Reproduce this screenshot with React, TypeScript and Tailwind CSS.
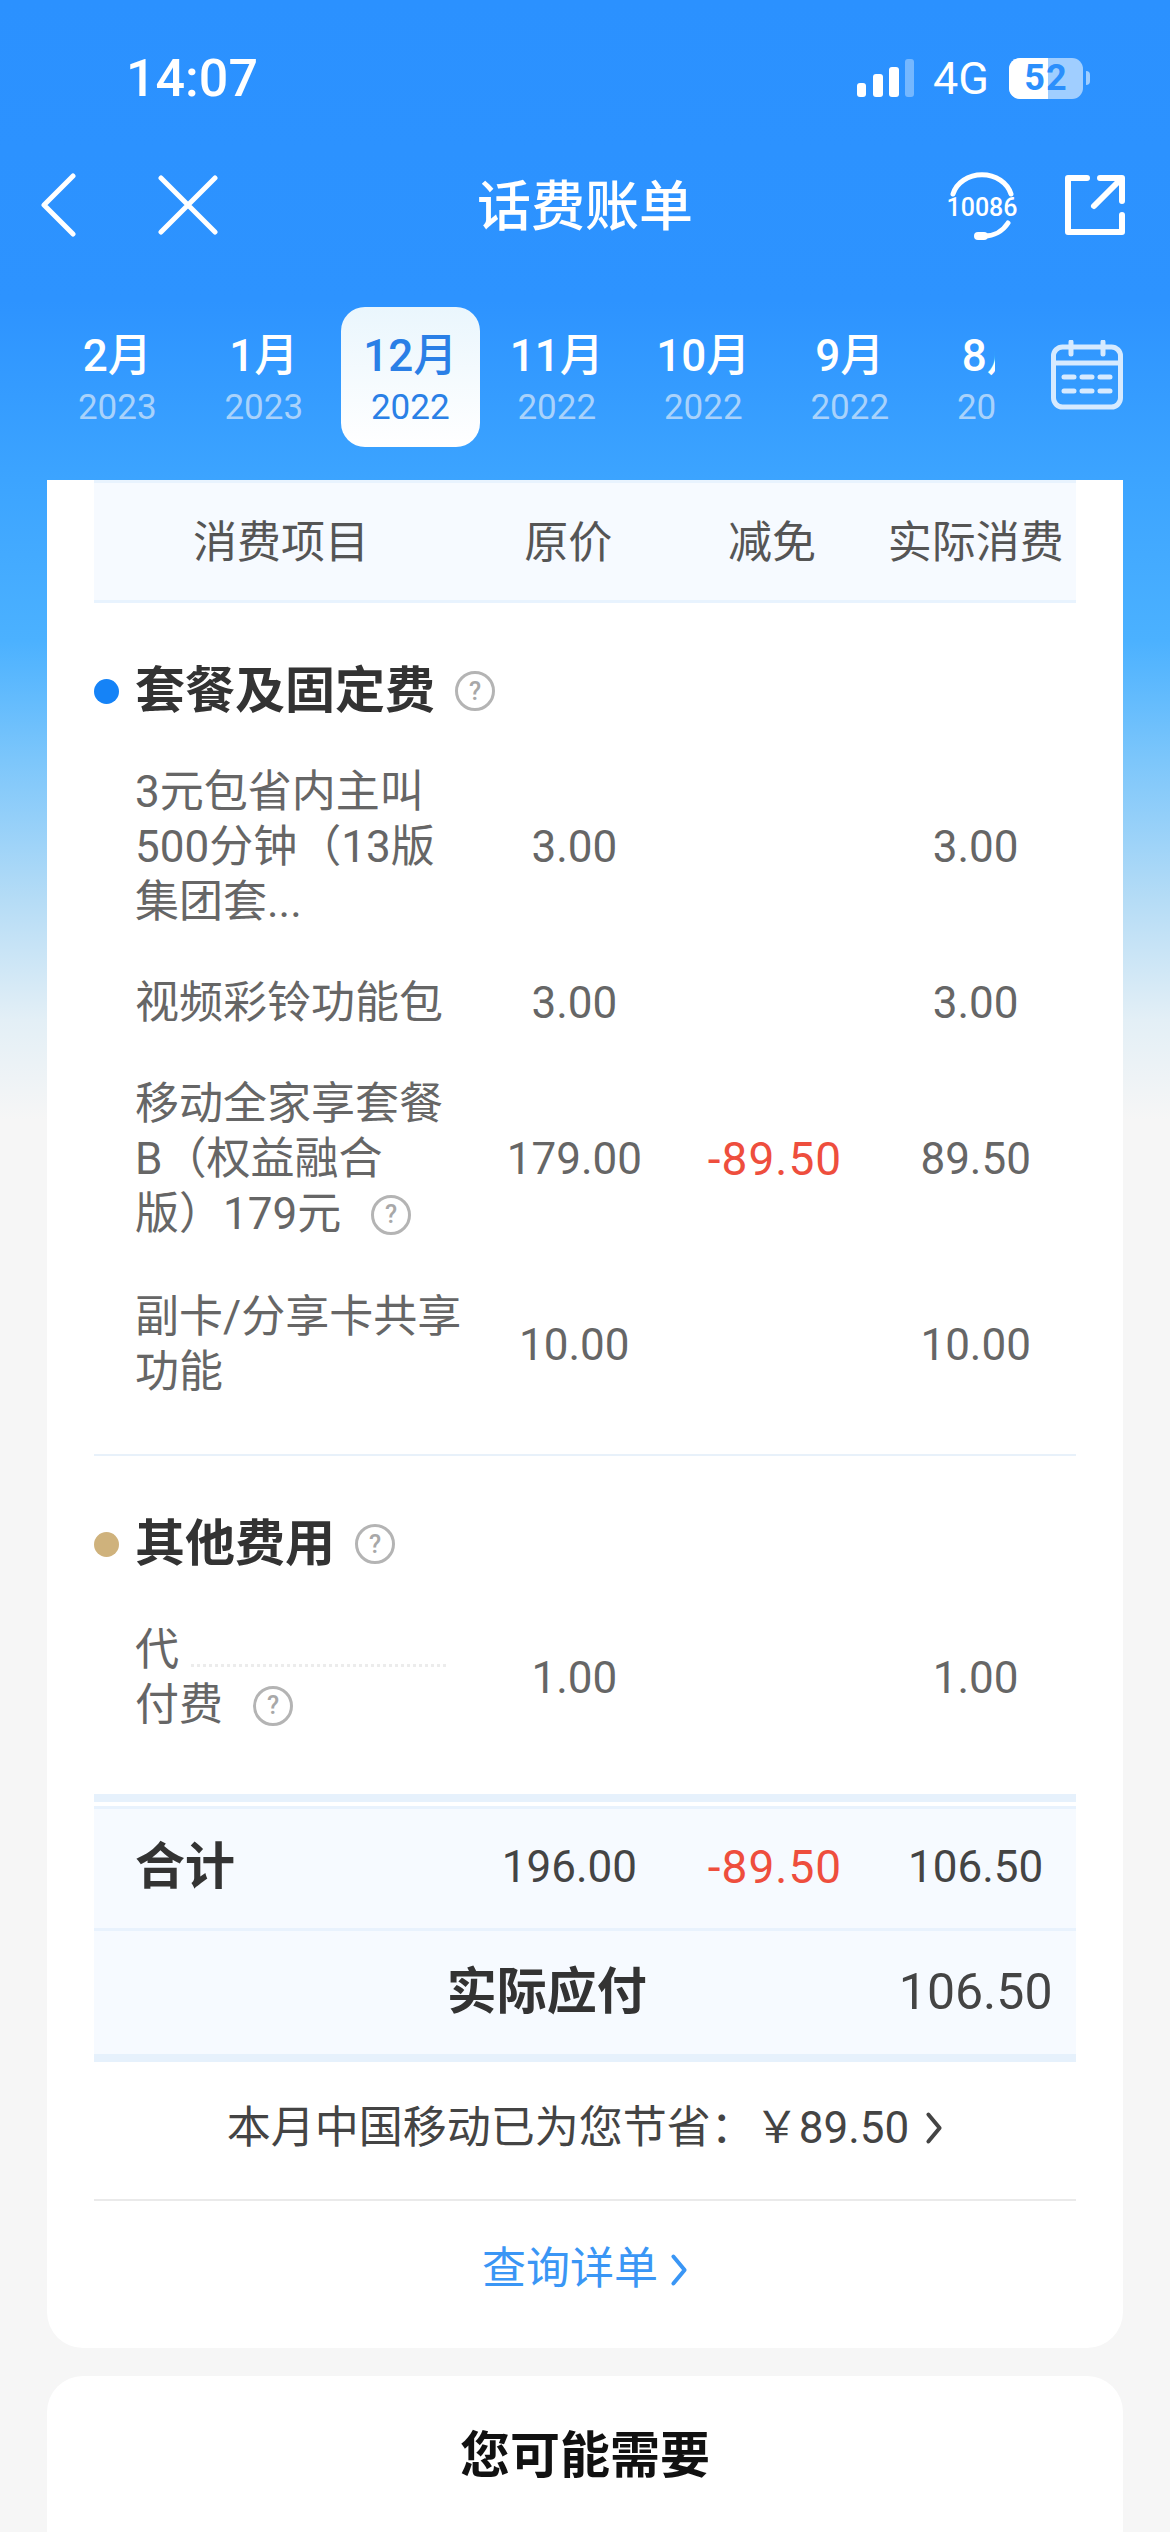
const months = [
  { month: "2月", year: "2023" },
  { month: "1月", year: "2023" },
  { month: "12月", year: "2022", active: true },
  { month: "11月", year: "2022" },
  { month: "10月", year: "2022" },
  { month: "9月", year: "2022" },
  { month: "8月", year: "2022" },
];

function Help() {
  return (
    <span className="inline-flex h-[40px] w-[40px] shrink-0 items-center justify-center rounded-full border-[3px] border-[#b4b4b4] text-[25px] font-medium leading-none text-[#a8a8a8]">
      ?
    </span>
  );
}

function Chevron({ className }: { className: string }) {
  return (
    <svg viewBox="0 0 16 30" className={className} fill="none" stroke="currentColor" strokeWidth="3.5" strokeLinecap="round" strokeLinejoin="round">
      <path d="M3 3 L13 15 L3 27" />
    </svg>
  );
}

function StatusBar() {
  return (
    <div className="flex h-[156px] shrink-0 items-center justify-between pl-[126px] pr-[80px] text-white">
      <span className="mt-[2px] text-[52px] font-medium leading-none">14:07</span>
      <div className="flex items-center">
        <svg viewBox="0 0 58 38" className="h-[38px] w-[58px]" fill="#fff">
          <rect x="0" y="24" width="9" height="14" rx="3" />
          <rect x="16" y="15" width="10" height="23" rx="3" />
          <rect x="32" y="8" width="10" height="30" rx="3" />
          <rect x="48" y="0" width="9" height="38" rx="3" fillOpacity="0.35" />
        </svg>
        <span className="ml-[18px] text-[45px] leading-none">4G</span>
        <div className="relative ml-[20px] h-[41px] w-[74px] overflow-hidden rounded-[11px] bg-white/55">
          <div className="h-full w-[39px] bg-white" />
          <span className="absolute inset-0 flex items-center justify-center text-[36px] font-bold leading-none tracking-[1px] text-[#2b8ffc]">52</span>
        </div>
        <span className="ml-[3px] h-[14px] w-[4px] rounded-r-full bg-white/55" />
      </div>
    </div>
  );
}

function NavBar() {
  return (
    <div className="relative flex h-[98px] shrink-0 items-center text-white">
      <svg viewBox="0 0 36 64" className="ml-[40px] h-[64px] w-[36px]" fill="none" stroke="#fff" strokeWidth="5" strokeLinecap="round" strokeLinejoin="round">
        <path d="M33 3 L4 32 L33 61" />
      </svg>
      <svg viewBox="0 0 60 60" className="ml-[82px] h-[60px] w-[60px]" fill="none" stroke="#fff" strokeWidth="5" strokeLinecap="round">
        <path d="M3 3 L57 57 M57 3 L3 57" />
      </svg>
      <span className="absolute left-0 right-0 top-[25px] text-center text-[54px] font-medium leading-none">话费账单</span>
      <svg viewBox="0 0 72 70" className="ml-auto h-[70px] w-[72px]" fill="none" stroke="#fff" strokeWidth="5" strokeLinecap="round">
        <path d="M7 24 A30 26 0 0 1 65 24" />
        <path d="M62 53 A28 28 0 0 1 38 66" />
        <path d="M32 66 L38 66" strokeWidth="8" />
        <text x="36" y="46" textAnchor="middle" fill="#fff" stroke="none" fontSize="25" fontWeight="500">10086</text>
      </svg>
      <svg viewBox="0 0 60 62" className="ml-[47px] mr-[45px] h-[62px] w-[60px]" fill="none" stroke="#fff" strokeWidth="6" strokeLinecap="round" strokeLinejoin="round">
        <path d="M22 4 H3 V58 H57 V41" />
        <path d="M35 4 H57 V27" />
        <path d="M29 32 L55 6" />
      </svg>
    </div>
  );
}

function MonthTabs() {
  return (
    <div className="mt-[53px] flex h-[140px] shrink-0">
      <div className="flex w-[995px] shrink-0 overflow-hidden pl-[44px]">
        {months.map((item) => (
          <div key={item.month} className="w-[146.5px] shrink-0 px-[4px]">
            <div
              className={
                item.active
                  ? "flex h-[140px] flex-col items-center rounded-[24px] bg-gradient-to-b from-[#eaf6fd] to-white pt-[26px]"
                  : "flex h-[140px] flex-col items-center pt-[26px]"
              }
            >
              <span className={item.active ? "whitespace-nowrap text-[44px] font-medium leading-[46px] text-[#2a7fe6]" : "whitespace-nowrap text-[44px] font-medium leading-[46px] text-white"}>
                {item.month}
              </span>
              <span className={item.active ? "mt-[9px] text-[35px] leading-[40px] text-[#2a80e6]" : "mt-[9px] text-[35px] leading-[40px] text-[#a9d2fb]"}>
                {item.year}
              </span>
            </div>
          </div>
        ))}
      </div>
      <svg viewBox="0 0 72 70" className="ml-[56px] mt-[33px] h-[70px] w-[72px]" fill="none" stroke="#d6eaff" strokeWidth="5" strokeLinecap="round">
        <rect x="2.5" y="7" width="67" height="60" rx="9" />
        <path d="M3 23 H69" />
        <path d="M20 2 V14 M52 2 V14" />
        <path d="M13 37 H23 M31 37 H41 M49 37 H59 M13 51 H23 M31 51 H41 M49 51 H59" />
      </svg>
    </div>
  );
}

type RowData = { lines: string[]; origin: string; cut?: string; actual: string; help?: boolean; masked?: boolean };

function FeeRow({ lines, origin, cut, actual, help, masked }: RowData) {
  return (
    <div className="grid grid-cols-[380px_1fr_1fr_1fr] items-center text-[44px] leading-[55px] text-[#666]">
      <div className="whitespace-nowrap pl-[41px]">
        {lines.map((line, i) => (
          <div key={line} className="flex items-center">
            <span>{line}</span>
            {masked && i === 0 ? <span className="ml-[12px] mt-[30px] w-[255px] border-b-[3px] border-dotted border-[#ececec]" /> : null}
            {help && i === lines.length - 1 ? (
              <span className="ml-[30px] flex">
                <Help />
              </span>
            ) : null}
          </div>
        ))}
      </div>
      <div className="text-center">{origin}</div>
      <div className="text-center text-[46px] tracking-[1px] text-[#ee4e3d]">{cut}</div>
      <div className="text-center">{actual}</div>
    </div>
  );
}

function SectionTitle({ title, dot }: { title: string; dot: string }) {
  return (
    <div className="flex h-[60px] items-center">
      <span className={`h-[25px] w-[25px] rounded-full ${dot}`} />
      <span className="ml-[16px] text-[50px] font-bold leading-none text-[#333]">{title}</span>
      <span className="ml-[20px] flex">
        <Help />
      </span>
    </div>
  );
}

export default function App() {
  return (
    <div className="flex h-[2532px] w-[1170px] flex-col overflow-hidden bg-[linear-gradient(180deg,#2b91ff_0px,#2d93ff_300px,#3ca4ff_480px,#4bb1ff_640px,#7cc6fb_760px,#b5dcf6_900px,#e3eff6_1020px,#f6f6f6_1120px)] font-['Roboto','Noto_Sans_CJK_SC',sans-serif]">
      <StatusBar />
      <NavBar />
      <MonthTabs />

      <div className="mx-[47px] mt-[33px] shrink-0 rounded-b-[36px] bg-white px-[47px]">
        <div className="grid h-[123px] grid-cols-[380px_1fr_1fr_1fr] items-center border-y-[3px] border-y-[#e8f3fe] bg-[#f6faff] pt-[2px] text-[44px] leading-none text-[#555]">
          <div className="pl-[99px]">消费项目</div>
          <div className="pr-[12px] text-center">原价</div>
          <div className="pr-[6px] text-center">减免</div>
          <div className="whitespace-nowrap text-center">实际消费</div>
        </div>

        <div className="flex flex-col pt-[58px]">
          <SectionTitle title="套餐及固定费" dot="bg-[#1583f7]" />
          <div className="mt-[44px] flex flex-col gap-[46px] pb-[54px]">
            <FeeRow lines={["3元包省内主叫", "500分钟（13版", "集团套..."]} origin="3.00" actual="3.00" />
            <FeeRow lines={["视频彩铃功能包"]} origin="3.00" actual="3.00" />
            <FeeRow lines={["移动全家享套餐", "B（权益融合", "版）179元"]} origin="179.00" cut="-89.50" actual="89.50" help />
            <div className="mt-[2px]">
              <FeeRow lines={["副卡/分享卡共享", "功能"]} origin="10.00" actual="10.00" />
            </div>
          </div>
        </div>

        <div className="border-t-[2px] border-[#e8f1fa] pt-[58px]">
          <SectionTitle title="其他费用" dot="bg-[#cfb27c]" />
          <div className="mt-[49px] pb-[61px]">
            <FeeRow lines={["代", "付费"]} origin="1.00" actual="1.00" help masked />
          </div>
        </div>

        <div className="border-t-[8px] border-[#e6f1fc] pt-[4px]">
          <div className="grid h-[125px] grid-cols-[380px_1fr_1fr_1fr] items-center border-y-[3px] border-y-[#e8f2fd] bg-[#f6faff] pb-[3px] text-[44px] leading-none text-[#444]">
            <div className="pl-[41px] text-[50px] font-bold text-[#333]">合计</div>
            <div className="pr-[10px] text-center">196.00</div>
            <div className="text-center text-[46px] tracking-[1px] text-[#ee4e3d]">-89.50</div>
            <div className="text-center">106.50</div>
          </div>
          <div className="grid h-[123px] grid-cols-[380px_1fr_1fr_1fr] items-center bg-[#f6faff] pb-[2px] leading-none text-[#444]">
            <div className="col-span-2 pr-[28px] text-right text-[50px] font-bold text-[#333]">实际应付</div>
            <div />
            <div className="text-center text-[50px]">106.50</div>
          </div>
        </div>

        <div className="flex h-[147px] items-center justify-center gap-[16px] border-y-[8px] border-b-[2px] border-t-[#e6f1fc] border-b-[#eaeaea] pb-[5px] text-[44px] leading-none text-[#444]">
          <span>本月中国移动已为您节省：￥89.50</span>
          <Chevron className="h-[34px] w-[18px]" />
        </div>

        <div className="flex h-[147px] items-start justify-center gap-[12px] pt-[46px] text-[44px] leading-[44px] text-[#3a96f5]">
          <span>查询详单</span>
          <Chevron className="mt-[6px] h-[34px] w-[18px]" />
        </div>
      </div>

      <div className="mx-[47px] mt-[28px] flex-1 rounded-t-[36px] bg-white pt-[50px] text-center text-[50px] font-bold leading-[60px] text-[#111]">
        您可能需要
      </div>
    </div>
  );
}
